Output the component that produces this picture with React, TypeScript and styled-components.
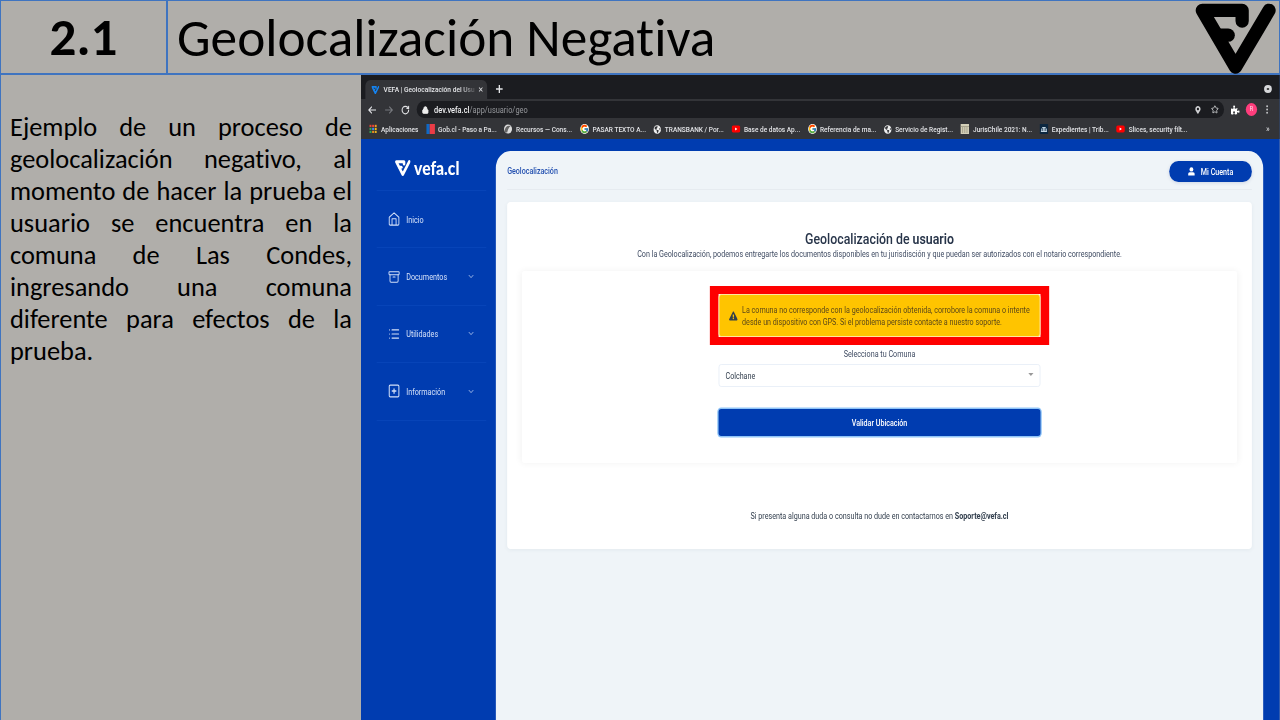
import React from "react";
import styled, { createGlobalStyle } from "styled-components";
import { Archive, ChevronDown, List, Lock, RotateCw, Star } from "lucide-react";
import { FaExclamationTriangle, FaPuzzlePiece, FaMapMarkerAlt, FaGlobeAmericas } from "react-icons/fa";
import { FcGoogle } from "react-icons/fc";

const SQUEEZE = 0.87;
const BLUE = "#003cb0";

const GlobalStyle = createGlobalStyle`
  * { box-sizing: border-box; }
  body { margin: 0; background: #b0aeaa; overflow: hidden; }
`;

const Slide = styled.div`
  width: 1280px;
  height: 720px;
  display: flex;
  flex-direction: column;
  overflow: hidden;
  background: #b0aeaa;
  color: #000;
  font-family: Calibri, Carlito, Lato, sans-serif;
  font-variant-ligatures: none;
`;

const Header = styled.header`
  height: 75px;
  flex: none;
  display: flex;
  border: 1.5px solid #3f74c0;
  border-bottom-width: 2px;
`;

const NumberCell = styled.div`
  width: 167px;
  flex: none;
  display: flex;
  align-items: center;
  justify-content: center;
  border-right: 2px solid #3f74c0;
  font-size: 53px;
  font-weight: 700;
`;

const Title = styled.h1`
  margin: 0;
  padding: 0 0 0 9px;
  flex: 1;
  display: flex;
  align-items: center;
  font-size: 53.3px;
  font-weight: 400;
  white-space: nowrap;
`;

const LogoCell = styled.div`
  width: 84px;
  padding-top: 2px;
`;

const Body = styled.div`
  flex: 1;
  display: flex;
  min-height: 0;
`;

const Notes = styled.aside`
  width: 361px;
  flex: none;
  border-left: 1.5px solid #3f74c0;
  padding: 36px 9px 0 9px;
`;

const NoteText = styled.div`
  font-size: 26.4px;
  line-height: 32px;
`;

const NoteLine = styled.div<{ $last?: boolean }>`
  text-align: justify;
  text-align-last: ${(p) => (p.$last ? "left" : "justify")};
  white-space: nowrap;
`;

const Screen = styled.section`
  width: ${919 / SQUEEZE}px;
  flex: none;
  height: 645px;
  transform: scaleX(${SQUEEZE});
  transform-origin: left top;
  display: flex;
  flex-direction: column;
  background: ${BLUE};
  font-family: Roboto, sans-serif;
  font-size: 8px;
  color: #34404f;
`;

const TabStrip = styled.div`
  height: 24px;
  flex: none;
  background: #1b1c20;
  display: flex;
  align-items: flex-end;
  padding: 0 9px 0 5px;
  color: #e4e5e8;
`;

const Tab = styled.div`
  width: 140px;
  height: 19px;
  display: flex;
  align-items: center;
  gap: 4px;
  padding: 0 5px 0 7px;
  border-radius: 6px 6px 0 0;
  background: #333438;
`;

const TabTitle = styled.span`
  flex: 1;
  padding-left: 1px;
  white-space: nowrap;
  font-size: 7.6px;
  font-weight: 500;
  mask-image: linear-gradient(90deg, #000 84%, rgba(0, 0, 0, 0.15));
`;

const NewTab = styled.div`
  flex: 1;
  height: 19px;
  padding: 5px 0 0 10px;
`;

const TabMenu = styled.div`
  width: 9px;
  height: 8px;
  margin-bottom: 6px;
  border-radius: 50%;
  border: 3px solid #d6d7da;
  background: #333;
`;

const Toolbar = styled.div`
  height: 21px;
  flex: none;
  display: flex;
  align-items: center;
  background: #333438;
  color: #dfe0e3;
  padding: 0 12px 0 8px;
`;

const NavIcons = styled.div`
  width: 56px;
  display: flex;
  gap: 9px;
  align-items: center;
`;

const Address = styled.div`
  width: 928px;
  height: 17px;
  border-radius: 9px;
  background: #1b1c20;
  display: flex;
  align-items: center;
  padding: 0 6px;
  font-size: 8.5px;
  color: #96989c;
  b { font-weight: 500; color: #f0f0f2; }
`;

const Url = styled.span`
  flex: 1;
  padding-left: 6px;
`;

const AddressIcons = styled.span`
  display: flex;
  gap: 11px;
  align-items: center;
  color: #d0d1d4;
`;

const ToolIcons = styled.div`
  flex: 1;
  display: flex;
  align-items: center;
  padding-left: 8px;
`;

const Avatar = styled.span`
  width: 13px;
  height: 13px;
  margin: 0 10px 0 7px;
  flex: none;
  border-radius: 50%;
  background: #ff3d7c;
  color: #ffd4e2;
  text-align: center;
  font-size: 7px;
  line-height: 13px;
`;

const Bookmarks = styled.div`
  height: 19px;
  flex: none;
  display: flex;
  align-items: center;
  background: #333438;
  color: #e2e3e6;
  padding: 0 12px 1px 9px;
`;

const Bookmark = styled.div<{ $w: number }>`
  width: ${(p) => p.$w}px;
  flex: none;
  display: flex;
  align-items: center;
  gap: 4px;
  white-space: nowrap;
  font-size: 7.5px;
  font-weight: 500;
  svg { flex: none; }
`;

const More = styled.span`
  margin-left: auto;
  font-size: 9px;
`;

const Workspace = styled.div`
  flex: 1;
  display: flex;
  min-height: 0;
`;

const Sidebar = styled.nav`
  width: 155px;
  flex: none;
  padding: 0 11px 0 18px;
  color: #d3e0f8;
`;

const Brand = styled.div`
  height: 52px;
  display: flex;
  align-items: center;
  gap: 4px;
  padding: 6px 0 0 21px;
  color: #fff;
  font-family: Lato, sans-serif;
  font-size: 18px;
  font-weight: 900;
  border-bottom: 1px solid #0744b8;
`;

const MenuItem = styled.div`
  height: 57.4px;
  display: flex;
  align-items: center;
  padding: 0 13px;
  border-bottom: 1px solid #0744b8;
  font-size: 8.3px;
`;

const MenuLabel = styled.span`
  flex: 1;
  padding: 1px 0 0 7px;
`;

const Main = styled.main`
  width: 882px;
  flex: none;
  margin-top: 12px;
  padding: 0 13px;
  border-radius: 17px 17px 0 0;
  background: #eff4f8;
`;

const TopBar = styled.div`
  height: 39px;
  display: flex;
  align-items: center;
  justify-content: space-between;
  padding-top: 1px;
  border-bottom: 1px solid #e6ebf0;
  color: #2350b0;
  font-size: 8.2px;
  font-weight: 500;
`;

const Account = styled.div`
  width: 95px;
  height: 21px;
  margin-top: 2px;
  border-radius: 11px;
  background: ${BLUE};
  color: #fff;
  display: flex;
  align-items: center;
  justify-content: center;
  gap: 6px;
  box-shadow: 0 1px 4px rgba(0, 40, 130, 0.15);
  font-size: 8.2px;
`;

const Card = styled.div`
  height: 347px;
  margin-top: 12px;
  padding: 29px 17px 0;
  border-radius: 4px;
  background: #fff;
  box-shadow: 0 1px 5px rgba(30, 60, 90, 0.06);
  display: flex;
  flex-direction: column;
  text-align: center;
`;

const CardTitle = styled.h2`
  margin: 0;
  font-size: 14.2px;
  line-height: 16px;
  font-weight: 500;
  color: #273449;
  b { font-weight: 600; }
`;

const Intro = styled.p`
  margin: 1px 0 0;
  font-size: 8.25px;
  line-height: 12px;
  color: #3f4b62;
`;

const Panel = styled.div`
  height: 192px;
  margin-top: 11px;
  box-shadow: 0 0 8px rgba(0, 0, 0, 0.055);
  border-radius: 3px;
  padding-top: 15px;
  display: flex;
  flex-direction: column;
  align-items: center;
`;

const Highlight = styled.div`
  width: 390px;
  height: 59px;
  flex: none;
  border: solid #fe0000;
  border-width: 8px 10px;
  background: #fff;
`;

const Alert = styled.div`
  height: 43px;
  display: flex;
  align-items: center;
  gap: 5px;
  padding: 0 0 0 11px;
  border-radius: 3px;
  background: #ffc400;
  border: 1px solid #ffe9a0;
  color: #5c4818;
  text-align: left;
  white-space: nowrap;
  font-size: 8.23px;
  line-height: 12px;
  svg { color: #33404a; flex: none; }
`;

const FieldLabel = styled.div`
  height: 19px;
  line-height: 18px;
  font-size: 8.25px;
  color: #3f4b62;
`;

const Select = styled.div`
  width: 370px;
  height: 23px;
  flex: none;
  border: 1px solid #e9eff7;
  border-radius: 3px;
  display: flex;
  align-items: center;
  justify-content: space-between;
  padding: 0 7px;
  font-size: 8.2px;
`;

const Caret = styled.i`
  margin-bottom: 2px;
  border: solid transparent;
  border-width: 3px 3px 0;
  border-top-color: #999;
`;

const Submit = styled.button`
  width: 370px;
  height: 27px;
  flex: none;
  margin: 22px 0 0;
  border: 0;
  border-radius: 3px;
  background: ${BLUE};
  box-shadow: 0 0 0 1.5px #8fc4f7;
  color: #fff;
  font: 500 8.2px Roboto, sans-serif;
`;

const Support = styled.p`
  margin: 47px 0 0;
  font-size: 8.25px;
  line-height: 12px;
  b { font-weight: 700; }
`;

const Vefa = ({ w, h, stroke = 40 }: { w: number; h: number; stroke?: number }) => (
  <svg width={w} height={h} viewBox="106 10 244 212" preserveAspectRatio="none" fill="none"
    stroke="currentColor" strokeWidth={stroke} strokeLinecap="round" strokeLinejoin="round">
    <path d="M248 64V32H128L228 201L329 32" />
    <path d="M180 106H206" />
  </svg>
);

const Home = () => (
  <svg width="14" height="14" viewBox="0 0 24 24" fill="none" stroke="currentColor" strokeWidth="1.8" strokeLinejoin="round">
    <path d="M2.5 9l9.5-7.5 9.5 7.5v11.5a2 2 0 0 1-2 2h-15a2 2 0 0 1-2-2zM8 22V11.5h8V22" />
  </svg>
);

const PlusBox = () => (
  <svg width="14" height="14" viewBox="0 0 24 24" fill="none" stroke="currentColor" strokeWidth="2">
    <rect x="2.5" y="2" width="19" height="20" rx="2" />
    <path d="M12 7.5v9M7.5 12h9" strokeWidth="2.4" />
  </svg>
);

const Person = () => (
  <svg width="9" height="9" viewBox="0 0 9 9" fill="currentColor">
    <circle cx="4.5" cy="2.4" r="2.2" />
    <path d="M.8 8.6V6.8Q.8 5.3 2.5 5.3h4Q8.2 5.3 8.2 6.8v1.8z" />
  </svg>
);

const Arrow = ({ back }: { back?: boolean }) => (
  <svg width="10" height="8" viewBox="0 0 10 8" fill="none" stroke={back ? "#e6e7ea" : "#77797e"} strokeWidth="1.2">
    <path d={back ? "M9.3 4H1M4.5.6L1 4l3.5 3.4" : "M.7 4H9M5.5.6L9 4 5.5 7.4"} />
  </svg>
);

const Cross = ({ size, turned }: { size: number; turned?: boolean }) => (
  <svg width={size} height={size} viewBox="0 0 8 8" stroke="#e4e5e8" strokeWidth="1.5">
    <path d={turned ? "M1 1l6 6M7 1L1 7" : "M4 0v8M0 4h8"} />
  </svg>
);

const TabIcon = styled.span`
  display: flex;
  color: #1583f0;
`;

const GoogleIcon = styled(FcGoogle)`
  border-radius: 5px;
  background: #fff;
`;

const gridColors = ["#e94335", "#e94335", "#f29a25", "#35a853", "#4285f4", "#f5ba15", "#35a853", "#e98a20", "#e8b820"];

const Favicon = ({ kind }: { kind: string }) => {
  if (kind === "google") return <GoogleIcon size={10} />;
  if (kind === "globe") return <FaGlobeAmericas size={9} color="#eee" />;
  return (
    <svg width="10" height="10" viewBox="0 0 10 10">
      {kind === "apps" && gridColors.map((c, i) => (
        <rect key={i} x={0.8 + (i % 3) * 3} y={0.8 + Math.floor(i / 3) * 3} width="2.2" height="2.2" fill={c} />
      ))}
      {kind === "gob" && <><path d="M0 0h4v10H0z" fill="#0f69c4" /><path d="M4 0h6v10H4z" fill="#eb3c46" /></>}
      {kind === "swirl" && <><circle cx="5" cy="5" r="4.6" fill="#ddd" /><path d="M1 7Q2 1 8 2Q5 4 4 8.5Q2 9 1 7" fill="#666" /></>}
      {kind === "tube" && <><rect x="0" y="1.4" width="10" height="7.2" rx="2" fill="#f00" /><path d="M4 3.4v3.2L6.6 5z" fill="#fff" /></>}
      {kind === "law" && <><rect width="10" height="10" fill="#d3cfb8" /><path d="M0 2.5h10M2.5 3v6M5 3v6M7.5 3v6" stroke="#918c76" strokeWidth=".7" /></>}
      {kind === "court" && <><rect width="10" height="10" fill="#0c2740" /><path d="M1.5 7.5h7M2.5 7V4.5M4.3 7V4M6 7V4M7.7 7V4.5M3 3.5h4" stroke="#d0e2ee" /></>}
    </svg>
  );
};

const bookmarks: [string, string, number][] = [
  ["apps", "Aplicaciones", 65.5],
  ["gob", "Gob.cl - Paso a Pa...", 89.7],
  ["swirl", "Recursos — Cons...", 88],
  ["google", "PASAR TEXTO A...", 84],
  ["globe", "TRANSBANK / Por...", 90],
  ["tube", "Base de datos Ap...", 87.4],
  ["google", "Referencia de ma...", 87.4],
  ["globe", "Servicio de Regist...", 88.5],
  ["law", "JurisChile 2021: N...", 90.5],
  ["court", "Expedientes | Trib...", 88.5],
  ["tube", "Slices, security filt...", 90],
];

const notes = [
  "Ejemplo de un proceso de",
  "geolocalización negativo, al",
  "momento de hacer la prueba el",
  "usuario se encuentra en la",
  "comuna de Las Condes,",
  "ingresando una comuna",
  "diferente para efectos de la",
  "prueba.",
];

export default function App() {
  return (
    <Slide>
      <GlobalStyle />
      <Header>
        <NumberCell>2.1</NumberCell>
        <Title>Geolocalización Negativa</Title>
        <LogoCell><Vefa w={81} h={71} /></LogoCell>
      </Header>
      <Body>
        <Notes>
          <NoteText>
            {notes.map((line, i) => <NoteLine key={line} $last={i === notes.length - 1}>{line}</NoteLine>)}
          </NoteText>
        </Notes>
        <Screen>
          <TabStrip>
            <Tab>
              <TabIcon><Vefa w={9} h={8} stroke={46} /></TabIcon>
              <TabTitle>VEFA | Geolocalización del Usu</TabTitle>
              <Cross size={7} turned />
            </Tab>
            <NewTab><Cross size={8} /></NewTab>
            <TabMenu />
          </TabStrip>
          <Toolbar>
            <NavIcons><Arrow back /><Arrow /><RotateCw size={10} strokeWidth={3} /></NavIcons>
            <Address>
              <Lock size={8} fill="#eee" strokeWidth={3} color="#eee" />
              <Url><b>dev.vefa.cl</b>/app/usuario/geo</Url>
              <AddressIcons><FaMapMarkerAlt size={8} /><Star size={9} strokeWidth={2.5} /></AddressIcons>
            </Address>
            <ToolIcons>
              <FaPuzzlePiece size={10} color="#fff" />
              <Avatar>R</Avatar>
              <svg width="3" height="9" viewBox="0 0 3 9" fill="#d0d1d4">
                <circle cx="1.5" cy="1.2" r="1" /><circle cx="1.5" cy="4.5" r="1" /><circle cx="1.5" cy="7.8" r="1" />
              </svg>
            </ToolIcons>
          </Toolbar>
          <Bookmarks>
            {bookmarks.map(([kind, label, w]) => (
              <Bookmark key={label} $w={w}><Favicon kind={kind} />{label}</Bookmark>
            ))}
            <More>»</More>
          </Bookmarks>
          <Workspace>
            <Sidebar>
              <Brand><Vefa w={18} h={16} stroke={40} /><span>vefa.cl</span></Brand>
              <MenuItem><Home /><MenuLabel>Inicio</MenuLabel></MenuItem>
              <MenuItem><Archive size={14} strokeWidth={1.8} /><MenuLabel>Documentos</MenuLabel><ChevronDown size={9} /></MenuItem>
              <MenuItem><List size={14} /><MenuLabel>Utilidades</MenuLabel><ChevronDown size={9} /></MenuItem>
              <MenuItem><PlusBox /><MenuLabel>Información</MenuLabel><ChevronDown size={9} /></MenuItem>
            </Sidebar>
            <Main>
              <TopBar>
                <span>Geolocalización</span>
                <Account><Person />Mi Cuenta</Account>
              </TopBar>
              <Card>
                <CardTitle>Geolocalización de <b>usuario</b></CardTitle>
                <Intro>Con la Geolocalización, podemos entregarte los documentos disponibles en tu jurisdisción y que puedan ser autorizados con el notario correspondiente.</Intro>
                <Panel>
                  <Highlight>
                    <Alert>
                      <FaExclamationTriangle size={10} />
                      <span>La comuna no corresponde con la geolocalización obtenida, corrobore la comuna o intente<br />desde un dispositivo con GPS. Si el problema persiste contacte a nuestro soporte.</span>
                    </Alert>
                  </Highlight>
                  <FieldLabel>Selecciona tu Comuna</FieldLabel>
                  <Select>Colchane<Caret /></Select>
                  <Submit>Validar Ubicación</Submit>
                </Panel>
                <Support>Si presenta alguna duda o consulta no dude en contactarnos en <b>Soporte@vefa.cl</b></Support>
              </Card>
            </Main>
          </Workspace>
        </Screen>
      </Body>
    </Slide>
  );
}
